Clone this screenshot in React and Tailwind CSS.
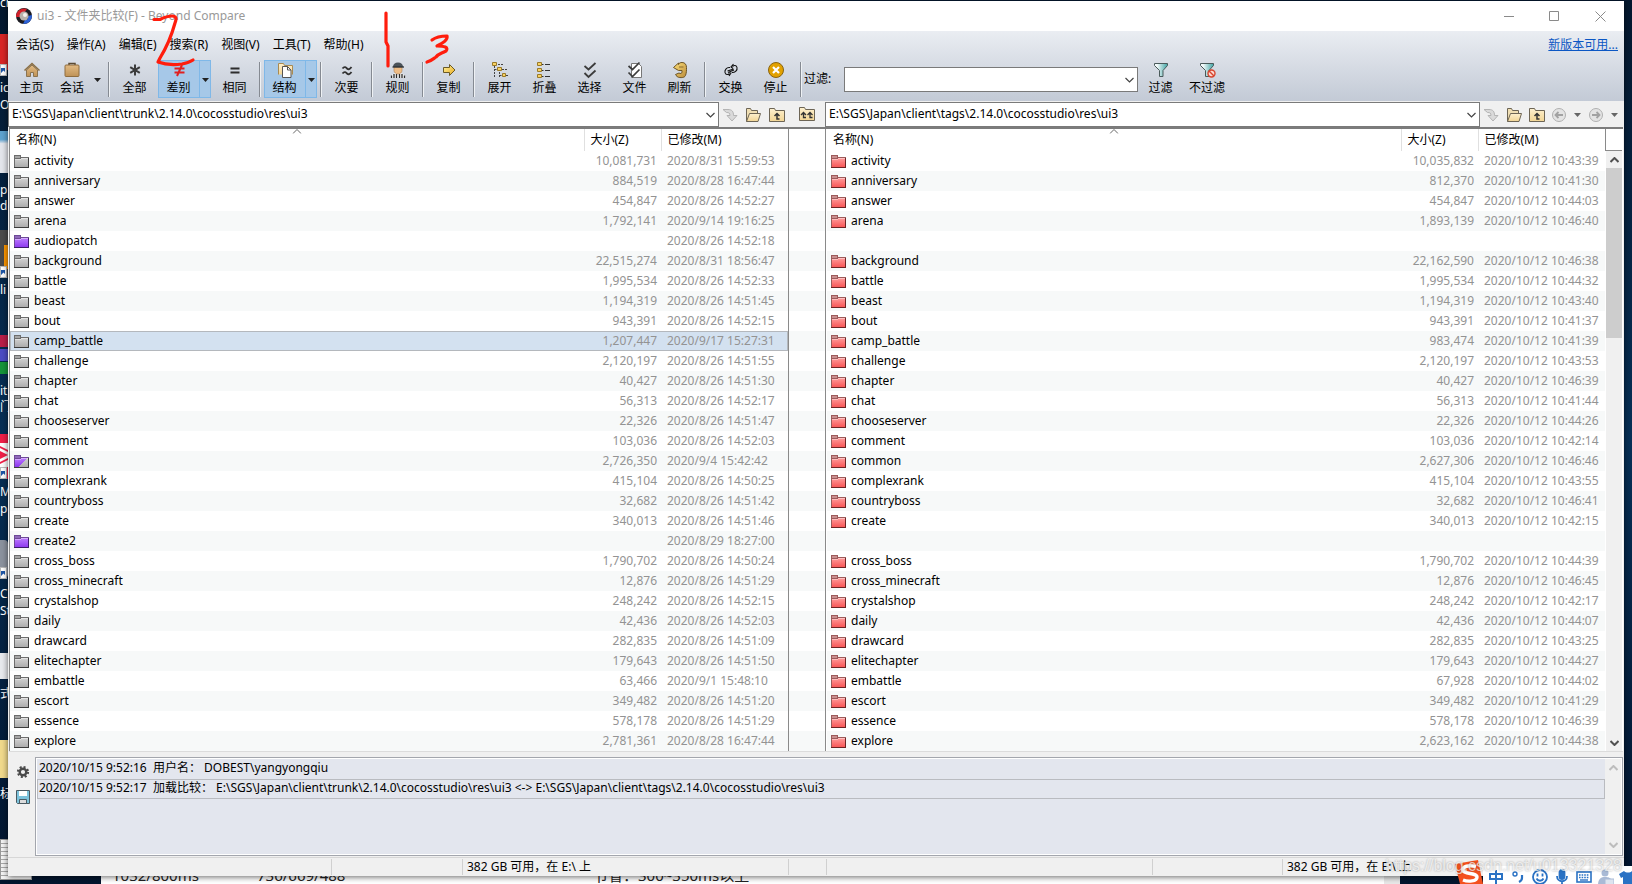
import React from "react";

const ROWS = [
  ["activity", "10,081,731", "2020/8/31 15:59:53", "10,035,832", "2020/10/12 10:43:39"],
  ["anniversary", "884,519", "2020/8/28 16:47:44", "812,370", "2020/10/12 10:41:30"],
  ["answer", "454,847", "2020/8/26 14:52:27", "454,847", "2020/10/12 10:44:03"],
  ["arena", "1,792,141", "2020/9/14 19:16:25", "1,893,139", "2020/10/12 10:46:40"],
  ["audiopatch", "", "2020/8/26 14:52:18", null, null, "purple"],
  ["background", "22,515,274", "2020/8/31 18:56:47", "22,162,590", "2020/10/12 10:46:38"],
  ["battle", "1,995,534", "2020/8/26 14:52:33", "1,995,534", "2020/10/12 10:44:32"],
  ["beast", "1,194,319", "2020/8/26 14:51:45", "1,194,319", "2020/10/12 10:43:40"],
  ["bout", "943,391", "2020/8/26 14:52:15", "943,391", "2020/10/12 10:41:37"],
  ["camp_battle", "1,207,447", "2020/9/17 15:27:31", "983,474", "2020/10/12 10:41:39"],
  ["challenge", "2,120,197", "2020/8/26 14:51:55", "2,120,197", "2020/10/12 10:43:53"],
  ["chapter", "40,427", "2020/8/26 14:51:30", "40,427", "2020/10/12 10:46:39"],
  ["chat", "56,313", "2020/8/26 14:52:17", "56,313", "2020/10/12 10:41:44"],
  ["chooseserver", "22,326", "2020/8/26 14:51:47", "22,326", "2020/10/12 10:44:26"],
  ["comment", "103,036", "2020/8/26 14:52:03", "103,036", "2020/10/12 10:42:14"],
  ["common", "2,726,350", "2020/9/4 15:42:42", "2,627,306", "2020/10/12 10:46:46", "mixed"],
  ["complexrank", "415,104", "2020/8/26 14:50:25", "415,104", "2020/10/12 10:43:55"],
  ["countryboss", "32,682", "2020/8/26 14:51:42", "32,682", "2020/10/12 10:46:41"],
  ["create", "340,013", "2020/8/26 14:51:46", "340,013", "2020/10/12 10:42:15"],
  ["create2", "", "2020/8/29 18:27:00", null, null, "purple"],
  ["cross_boss", "1,790,702", "2020/8/26 14:50:24", "1,790,702", "2020/10/12 10:44:39"],
  ["cross_minecraft", "12,876", "2020/8/26 14:51:29", "12,876", "2020/10/12 10:46:45"],
  ["crystalshop", "248,242", "2020/8/26 14:52:15", "248,242", "2020/10/12 10:42:17"],
  ["daily", "42,436", "2020/8/26 14:52:03", "42,436", "2020/10/12 10:44:07"],
  ["drawcard", "282,835", "2020/8/26 14:51:09", "282,835", "2020/10/12 10:43:25"],
  ["elitechapter", "179,643", "2020/8/26 14:51:50", "179,643", "2020/10/12 10:44:27"],
  ["embattle", "63,466", "2020/9/1 15:48:10", "67,928", "2020/10/12 10:44:02"],
  ["escort", "349,482", "2020/8/26 14:51:20", "349,482", "2020/10/12 10:41:29"],
  ["essence", "578,178", "2020/8/26 14:51:29", "578,178", "2020/10/12 10:46:39"],
  ["explore", "2,781,361", "2020/8/28 16:47:44", "2,623,162", "2020/10/12 10:44:38"],
];
const SELECTED = "camp_battle";
const stripe = (i) => (i % 2 ? "bg-[#f7f9f9]" : "bg-white");

const TONES = {
  gray: { tab: "#a6a6a6", top: "#d2d2d2", bottom: "#a9a9a9", edge: "#6d6d6d", dark: "#3c3c3c" },
  red: { tab: "#c98f8f", top: "#ff9c9c", bottom: "#f75050", edge: "#9c5b5b", dark: "#6b2323" },
  purple: { tab: "#8f68ba", top: "#bd7bff", bottom: "#8a35ee", edge: "#6e4a96", dark: "#3d1b6b" },
};

function Defs() {
  return (
    <svg className="absolute size-0" aria-hidden="true">
      <defs>
        {Object.entries(TONES).map(([k, t]) => (
          <linearGradient key={k} id={`folder-${k}`} x1="0" y1="0" x2="0" y2="1">
            <stop offset="0" stopColor={t.top} />
            <stop offset="1" stopColor={t.bottom} />
          </linearGradient>
        ))}
        <linearGradient id="tan" x1="0" y1="0" x2="0" y2="1">
          <stop offset="0" stopColor="#e2bb84" />
          <stop offset="1" stopColor="#bf9256" />
        </linearGradient>
        <linearGradient id="cream" x1="0" y1="0" x2="0" y2="1">
          <stop offset="0" stopColor="#fdf0cf" />
          <stop offset="1" stopColor="#f2d594" />
        </linearGradient>
        <linearGradient id="gold" x1="0" y1="0" x2="1" y2="1">
          <stop offset="0" stopColor="#fff3a0" />
          <stop offset="1" stopColor="#e9a91c" />
        </linearGradient>
        <linearGradient id="bronze" x1="0" y1="0" x2="1" y2="1">
          <stop offset="0" stopColor="#ffe27a" />
          <stop offset="1" stopColor="#b98a3a" />
        </linearGradient>
        <linearGradient id="teal" x1="0" y1="0" x2="1" y2="0">
          <stop offset="0.2" stopColor="#f4fbfb" />
          <stop offset="1" stopColor="#3fa3a3" />
        </linearGradient>
      </defs>
    </svg>
  );
}

function Folder({ tone }) {
  const base = tone === "mixed" ? "gray" : tone;
  const t = TONES[base];
  const tab = tone === "mixed" ? TONES.purple : t;
  return (
    <svg width="15" height="13" viewBox="0 0 15 13" shapeRendering="crispEdges" className="shrink-0" aria-hidden="true">
      <path d="M0 0h7v2h8v3H0z" fill={tab.edge} />
      <path d="M1 1h5v2H1zM7 3h7v1H7z" fill={tab.tab} />
      <path d="M0 4h7v-1h8v10H0z" fill={`url(#folder-${base})`} />
      {tone === "mixed" && <path d="M0 4h7v-1h7L4 12H0z" fill="url(#folder-purple)" />}
      <path d="M1 4.500h6M7 3.500h7" stroke="#fff" strokeOpacity=".4" fill="none" />
      <path d="M.5 4v8" stroke={tab.edge} />
      <path d="M0 12.500h14.500V3" stroke={t.dark} fill="none" />
    </svg>
  );
}

const Ic = ({ children, w = 18, h = 18 }) => (
  <svg width={w} height={h} viewBox={`0 0 ${w} ${h}`} fill="none" className="shrink-0" aria-hidden="true">
    {children}
  </svg>
);

const ICONS = {
  home: (
    <Ic>
      <path d="M3.500 9v6.500h4v-4h3v4h4V9L9 4z" fill="url(#tan)" stroke="#8a7350" />
      <path d="M1.500 9.500 9 2.500l7.500 7" stroke="#8a6f45" strokeWidth="1.600" />
    </Ic>
  ),
  bag: (
    <Ic>
      <path d="M6 4V2.500h6V4" stroke="#5b4a33" strokeWidth="1.500" />
      <rect x="2" y="4" width="14" height="11.500" rx="1" fill="url(#tan)" stroke="#8f6d3e" />
    </Ic>
  ),
  star: (
    <Ic>
      <path d="M9 3.500v11M4.200 6.200l9.600 5.600M13.800 6.200 4.200 11.800" stroke="#3c3c3c" strokeWidth="2" />
    </Ic>
  ),
  neq: (
    <Ic>
      <path d="M4.500 7.500h10M4.500 11.500h10M12 4 7 15" stroke="#e02020" strokeWidth="2" />
    </Ic>
  ),
  eq: (
    <Ic>
      <path d="M4.500 7.500h9M4.500 11.500h9" stroke="#2d2d2d" strokeWidth="2" />
    </Ic>
  ),
  struct: (
    <Ic>
      <path d="M2.500 13.500v-11h5l1 2h8v9" fill="url(#cream)" stroke="#a98a52" />
      <path d="M6.500 5.500h5l3.500 3.500v7.500h-8.500z" fill="#fff" stroke="#555" />
      <path d="M11.500 5.500V9H15" stroke="#555" />
    </Ic>
  ),
  approx: (
    <Ic>
      <path d="M4.500 7.500c2-2.500 3.500-1 4.500 0s2.500 1.500 4.500-1.500M4.500 12.500c2-2.500 3.500-1 4.500 0s2.500 1.500 4.500-1.500" stroke="#333" strokeWidth="1.800" />
    </Ic>
  ),
  referee: (
    <Ic>
      <path d="M1.500 17c0-3.500 3-5 7.500-5s7.500 1.500 7.500 5z" fill="#f2f2f2" />
      <path d="M2.500 14.500V17M5 13v4M7.500 13v4M10.500 13v4M13 13v4M15.500 14.500V17" stroke="#2b2b2b" strokeWidth="1.300" />
      <path d="M5 6h8v3.500c0 2-2 3.500-4 3.500s-4-1.500-4-3.500z" fill="#eebc85" stroke="#b08050" strokeWidth=".6" />
      <path d="M4 6C4 3 6 1.500 9 1.500S14 3 14 6z" fill="#4a5258" />
      <path d="M3.500 6h11.500" stroke="#2b2f33" strokeWidth="1.300" />
    </Ic>
  ),
  copy: (
    <Ic>
      <path d="M3.500 6.500h6v-3l5.500 5.500-5.500 5.500v-3h-6z" fill="url(#gold)" stroke="#6b5a26" />
    </Ic>
  ),
  expand: (
    <Ic>
      <path d="M3.500 5v12M3.500 8.500h3M8.500 11v5M8.500 14.500h4M7 3.500h5M11 8.500h5M15 14.500h3" stroke="#444" strokeDasharray="2 1" />
      <path d="M1.500 1.500h4v3h-4zM6.500 6.500h4v3h-4zM11.500 12.500h3v3h-3z" fill="#f8d264" stroke="#9a7a28" />
    </Ic>
  ),
  collapse: (
    <Ic>
      <path d="M6 3.500h1.500M9 3.500h5M6 9.500h1.500M9 9.500h5M6 15.500h1.500M9 15.500h5" stroke="#333" />
      <path d="M1.500 1.500h4v3h-4zM1.500 7.500h4v3h-4zM1.500 13.500h4v3h-4z" fill="#f8d264" stroke="#9a7a28" />
    </Ic>
  ),
  select: (
    <Ic>
      <path d="M3.500 5 7.500 8.500 14.500 2M3.500 12l4 4 7-6.500" stroke="#3c3c3c" strokeWidth="1.800" />
    </Ic>
  ),
  files: (
    <Ic>
      <path d="M5.500 2.500h7l3 3v11h-10z" fill="#fff" stroke="#777" />
      <path d="M2.500 5 6.500 8.500 13.500 1.500M2.500 11.500l4 4 7-7" stroke="#3c3c3c" strokeWidth="1.700" />
    </Ic>
  ),
  refresh: (
    <Ic>
      <path
        d="M2.500 6.500 7.500 2v1.500C8 2 9.500 1.500 11 1.500c3 0 4.500 2 4.500 5s0 5.500-1 8-5 2.500-8 1.500L4.500 13.500 8 12c1.500 1 3 .5 3-1V9.500H7.500z"
        fill="url(#bronze)"
        stroke="#6d5526"
      />
      <path d="M8 6h4.500" stroke="#8a6a2c" />
    </Ic>
  ),
  swap: (
    <Ic>
      <path d="M8 6.500h-1C4.500 6.500 2.500 9 3 11.500s3 2.500 4.500 1M7 11l2 1-2 3M10 11.500h1c2.500 0 4.500-2.500 4-5s-3-2.500-4.500-1M11 7.500 9 6l2.500-3M5.500 10l6-2M6 11.500l6-2.500" stroke="#111" strokeWidth="1.100" />
    </Ic>
  ),
  stop: (
    <Ic>
      <circle cx="9" cy="9" r="7.500" fill="#e2a100" stroke="#8a6410" />
      <path d="m6 6 6 6M12 6l-6 6" stroke="#fff" strokeWidth="2.200" />
    </Ic>
  ),
  filter: (
    <Ic>
      <path d="M2.500 2.500h13v2L11 9.500v6H7.500v-6L2.500 4.500z" fill="url(#teal)" stroke="#4a5a5a" />
    </Ic>
  ),
  nofilter: (
    <Ic>
      <path d="M2.500 2.500h13v2L11 9.500v6H7.500v-6L2.500 4.500z" fill="url(#teal)" stroke="#4a5a5a" />
      <circle cx="13.500" cy="12.500" r="3.500" fill="#fbd8d0" stroke="#d8452e" strokeWidth="1.400" />
      <path d="m11 10 5 5" stroke="#d8452e" strokeWidth="1.400" />
    </Ic>
  ),
};

const Tri = ({ color = "#222" }) => (
  <svg width="7" height="4" viewBox="0 0 7 4" aria-hidden="true">
    <path d="M0 0h7L3.500 4z" fill={color} />
  </svg>
);

const Chevron = ({ up, color = "#444", bold }) => (
  <svg width="9" height="6" viewBox="0 0 9 6" fill="none" aria-hidden="true">
    <path d={up ? "M.5 5 4.500 1l4 4" : "M.5 1 4.500 5l4-4"} stroke={color} strokeWidth={bold ? 2 : 1.2} />
  </svg>
);

function Tool({ icon, label, wide }) {
  return (
    <button className={`flex h-[38px] shrink-0 flex-col items-center gap-px pt-px ${wide ? "w-12" : "w-[45px]"}`}>
      {ICONS[icon]}
      <span className="leading-4 whitespace-nowrap">{label}</span>
    </button>
  );
}

function SplitTool({ icon, label, active }) {
  return (
    <div className={`flex h-[38px] shrink-0 ${active ? "mx-px bg-[#a6c8e8] ring-1 ring-inset ring-[#7fb8e8]" : ""}`}>
      <button className={`flex flex-col items-center gap-px pt-px ${active ? "w-[41px]" : "w-10"}`}>
        {ICONS[icon]}
        <span className="leading-4">{label}</span>
      </button>
      <button
        aria-label={`${label} ▾`}
        className={`flex items-center justify-center pt-px ${active ? "w-3 border-l border-[#7fb8e8]" : "w-[11px]"}`}
      >
        <Tri />
      </button>
    </div>
  );
}

const Sep = () => (
  <div className="flex h-[35px] w-[6px] shrink-0 justify-center">
    <div className="w-px bg-[#858a92]" />
    <div className="w-px bg-[#eef1f4]" />
  </div>
);

function PathSelect({ value, label }) {
  return (
    <div className="relative min-w-0 flex-1">
      <select
        aria-label={label}
        className="h-[25px] w-full appearance-none border border-[#7a7a7a] bg-white pr-6 pb-px pl-[3px] text-black"
      >
        <option>{value}</option>
      </select>
      <span className="pointer-events-none absolute top-[10px] right-1">
        <Chevron />
      </span>
    </div>
  );
}

const Go = () => (
  <Ic w={16} h={16}>
    <path d="M1 2.500h5c4 0 5.500 2 5.500 6H15l-5 5.500-5-5.500h3C8 6 7 5.500 4.500 5.500z" fill="#dadada" stroke="#b4b4b4" />
  </Ic>
);
const OpenFolder = () => (
  <Ic w={16} h={16}>
    <path d="M1.500 14.500v-13h4l1 2h6v3" fill="#f0dfb4" stroke="#6d6555" />
    <path d="M4.500 6.500h11l-2.500 8H1.500z" fill="url(#cream)" stroke="#6d6555" />
  </Ic>
);
const UpFolder = ({ double }) => (
  <Ic w={16} h={16}>
    <path d="M.5 14.500v-13h5l1 2h9v11z" fill="url(#cream)" stroke="#6d6555" />
    {double ? (
      <path d="M2 9 4.500 6.500 7 9M4.500 7v4.500H7M8.500 9 11 6.500 13.500 9M11 7v4.500h2.500" stroke="#333" strokeWidth="1.300" />
    ) : (
      <path d="M5.500 9 8 6.500 10.500 9M8 7v5h2.500" stroke="#333" strokeWidth="1.500" />
    )}
  </Ic>
);
const RoundArrow = ({ flip }) => (
  <Ic w={16} h={16}>
    <circle cx="8" cy="8" r="6.500" fill="#e4e4e4" stroke="#b0b0b0" />
    <path d={flip ? "M4 8h7M8.500 5l3 3-3 3" : "M12 8H5M7.500 5l-3 3 3 3"} stroke="#a2a2a2" strokeWidth="1.800" />
  </Ic>
);

const IconBtn = ({ label, children, className = "" }) => (
  <button aria-label={label} className={`flex h-6 shrink-0 items-center justify-center ${className}`}>
    {children}
  </button>
);

function Pane({ side }) {
  const left = side === "left";
  return (
    <div className={`min-w-0 flex-1 border-l border-[#8a8a8a] bg-white ${left ? "border-r" : "pl-px"}`}>
      <table className="w-full table-fixed border-collapse">
        <colgroup>
          <col />
          <col className="w-[77px]" />
          <col className="w-[127px]" />
        </colgroup>
        <thead>
          <tr className="h-[22px] text-left">
            <th className="relative p-0 pl-[6px] font-normal">
              名称(N)
              <span className="absolute top-0 left-1/2 -translate-x-1/2">
                <svg width="9" height="5" viewBox="0 0 9 5" fill="none" aria-hidden="true">
                  <path d="m.5 4.500 4-4 4 4" stroke="#666" />
                </svg>
              </span>
            </th>
            <th className="border-l border-[#e0e0e0] p-0 pl-[6px] font-normal">大小(Z)</th>
            <th className="border-l border-[#e0e0e0] p-0 pl-[6px] font-normal">已修改(M)</th>
          </tr>
        </thead>
        <tbody>
          {ROWS.map((r, i) => {
            const present = left || r[3] !== null;
            const sel = left && r[0] === SELECTED;
            return (
              <tr
                key={r[0]}
                className={`h-5 leading-4 ${sel ? "bg-[#d3e1f0] outline outline-1 -outline-offset-1 outline-[#b4b8bd]" : stripe(i)}`}
              >
                <td className="p-0 pl-1">
                  {present && (
                    <span className="flex items-center gap-[5px]">
                      <Folder tone={left ? r[5] || "gray" : "red"} />
                      {r[0]}
                    </span>
                  )}
                </td>
                <td className="p-0 pr-1 text-right text-[#939393]">{present && (left ? r[1] : r[3])}</td>
                <td className="p-0 pl-[6px] whitespace-nowrap text-[#939393]">{present && (left ? r[2] : r[4])}</td>
              </tr>
            );
          })}
        </tbody>
      </table>
    </div>
  );
}

function Status({ className = "", children }) {
  return <div className={`h-4 border-[#d0d0d0] pl-1 leading-4 whitespace-nowrap ${className}`}>{children}</div>;
}

const Shortcut = ({ className }) => (
  <div className={`absolute left-0 flex h-3 w-[7px] items-center border border-[#bbb] bg-white ${className}`}>
    <svg width="5" height="7" viewBox="0 0 5 7" aria-hidden="true">
      <path d="M0 1h4v4L2.500 3.500 0 6z" fill="#1d56a8" />
    </svg>
  </div>
);

const DESK_LABELS = [
  ["ch", "top-[-5px]"],
  ["ic", "top-[80px]"],
  ["O", "top-[97px]"],
  ["pp", "top-[182px]"],
  ["de", "top-[198px]"],
  ["li", "top-[282px]"],
  ["it", "top-[383px]"],
  ["门", "top-[399px]"],
  ["M", "top-[484px]"],
  ["pe", "top-[501px]"],
  ["C", "top-[586px]"],
  ["St", "top-[603px]"],
  ["式", "top-[686px]"],
  ["标", "top-[786px]"],
];

function Desktop() {
  return (
    <div className="absolute inset-0 overflow-hidden bg-linear-to-b from-[#04182f] via-[#073057] to-[#03152e]">
      <div className="absolute top-[34px] left-0 h-[36px] w-2 bg-[#d92626]" />
      <Shortcut className="top-[64px]" />
      <div className="absolute top-[131px] left-0 h-[42px] w-2 bg-linear-to-b from-[#5ea3cf] from-20% to-[#e4e6ec] to-30%" />
      <div className="absolute top-[230px] left-0 h-[48px] w-2 bg-[#4b4b4b]" />
      <div className="absolute top-[245px] left-1 h-6 w-1 bg-[#ff9800]" />
      <Shortcut className="top-[266px]" />
      <div className="absolute top-[335px] left-0 h-3 w-2 bg-[#b81f48]" />
      <div className="absolute top-[349px] left-0 h-3 w-2 bg-[#4c4cc4]" />
      <div className="absolute top-[362px] left-0 h-3 w-2 bg-[#15953a]" />
      <div className="absolute top-[434px] left-0 h-[45px] w-2 bg-[#f01f48]" />
      <svg width="8" height="24" viewBox="0 0 8 24" className="absolute top-[443px] left-0" aria-hidden="true">
        <path d="M0 0h8v7L0 3zM0 24h8v-7L0 21z" fill="#fff" />
        <path d="M0 5l8 4v6l-8 4z" fill="#fff" />
        <path d="M0 8l8 4-8 4z" fill="#f01f48" />
      </svg>
      <Shortcut className="top-[467px]" />
      <div className="absolute top-[540px] left-0 h-[38px] w-2 rounded-r bg-[#8b929e]" />
      <Shortcut className="top-[567px]" />
      <div className="absolute top-[653px] left-0 h-[26px] w-2 bg-[#e8eaee]" />
      <div className="absolute top-[740px] left-0 h-[38px] w-2 bg-[#f1da8c]" />
      <div className="absolute top-[839px] left-0 h-[41px] w-8 border border-[#999] bg-[repeating-linear-gradient(#f4f4f4_0_3px,#a8a8a8_3px_4px)]" />
      {DESK_LABELS.map(([t, pos]) => (
        <span key={t} className={`absolute left-0 w-2 overflow-hidden leading-4 whitespace-nowrap text-white ${pos}`}>
          {t}
        </span>
      ))}
      <div className="absolute right-[232px] bottom-0 left-[101px] h-4 overflow-hidden bg-white text-[15px] leading-5 whitespace-nowrap text-[#222]">
        <span className="absolute top-[-3px] left-[11px]">1032/800ms</span>
        <span className="absolute top-[-3px] left-[156px]">736/669/488</span>
        <span className="absolute top-[-3px] left-[492px]">节省：300~350ms以上</span>
        <div className="absolute inset-y-0 right-0 w-4 bg-[#e8e8e8]" />
      </div>
    </div>
  );
}

const IME_ICONS = [
  <svg key="lang" width="14" height="14" viewBox="0 0 14 14" fill="none" stroke="currentColor" strokeWidth="2" aria-hidden="true">
    <path d="M1 4h12v5H1zM7 0v14" />
  </svg>,
  <svg key="punct" width="14" height="12" viewBox="0 0 14 12" fill="none" stroke="currentColor" aria-hidden="true">
    <circle cx="4" cy="3" r="2" strokeWidth="1.400" />
    <path d="M11 4v3c0 2-1 3-3 4" strokeWidth="2.200" />
  </svg>,
  <svg key="face" width="16" height="16" viewBox="0 0 16 16" fill="none" stroke="currentColor" strokeWidth="1.800" aria-hidden="true">
    <circle cx="8" cy="8" r="7" />
    <path d="M5.500 4.500v3M10.500 4.500v3M4.500 9.500c1.500 3 5.500 3 7 0" />
  </svg>,
  <svg key="mic" width="12" height="16" viewBox="0 0 12 16" fill="none" stroke="currentColor" strokeWidth="1.800" aria-hidden="true">
    <rect x="3.500" y="1" width="5" height="9" rx="2.500" fill="currentColor" />
    <path d="M1 7c0 7 10 7 10 0M6 12v4" />
  </svg>,
  <svg key="keys" width="16" height="12" viewBox="0 0 16 12" fill="none" stroke="currentColor" aria-hidden="true">
    <rect x="1" y="1" width="14" height="10" strokeWidth="1.600" />
    <path d="M3 4h10M3 6.500h10" strokeWidth="1.600" strokeDasharray="1.600 1" />
    <path d="M4 9h8" strokeWidth="1.400" />
  </svg>,
  <svg key="user" width="16" height="16" viewBox="0 0 16 16" fill="#a9bad6" aria-hidden="true">
    <circle cx="7" cy="4" r="3.500" />
    <path d="M0 16c0-6 3-8 7-8s5 1 6 2v6z" />
    <path d="M7 10h9v6H7z" fill="#dde4ef" stroke="#a9bad6" />
  </svg>,
  <svg key="skin" width="18" height="14" viewBox="0 0 18 14" fill="currentColor" aria-hidden="true">
    <path d="m0 4 5-3c2 2 6 2 8 0l5 3-2 4-2-1v7H4V7L2 8z" />
  </svg>,
];

function ImeBar() {
  return (
    <div className="absolute right-0 bottom-0 h-[18px] w-[149px] bg-white text-[#2a72c4]">
      <svg width="28" height="24" viewBox="0 0 28 24" className="absolute bottom-0 -left-[28px]" aria-hidden="true">
        <path d="M0 4 23 0l5 24H5z" fill="#f4511e" />
        <path d="M21 6.500C14 4.500 7 6.500 8 10.500s14 2 14 6.500-9 5-14 3" stroke="#fff" strokeWidth="3.400" fill="none" />
      </svg>
      <div className="flex h-full items-center overflow-hidden pt-1 pl-[2px]">
        {IME_ICONS.map((icon) => (
          <span key={icon.key} className="flex w-[22px] shrink-0 justify-center">{icon}</span>
        ))}
      </div>
    </div>
  );
}

function Annotations() {
  return (
    <svg width="460" height="80" viewBox="0 0 460 80" fill="none" stroke="#ff1d0d" strokeWidth="3.200" strokeLinecap="round" strokeLinejoin="round" className="pointer-events-none absolute top-0 left-0" aria-hidden="true">
      <path d="M154 19.500h6c4-2 7-3.500 12-3.500 4 0 5 2 3 7-3 11-7 22-15 35l-2 4c8 3 16 3 24 2 5-1 8-2 11-4" />
      <path d="M386 13v29l2 4v20" />
      <path d="M432 40c4-3 9-4 15-4 1 4-4 7-10 10 7 0 12 1 9 5-6 3-8 3-10 6-3 2-5 4-9 5" />
    </svg>
  );
}

const MENUS = ["会话(S)", "操作(A)", "编辑(E)", "搜索(R)", "视图(V)", "工具(T)", "帮助(H)"];

export default function App() {
  return (
    <div className="relative min-h-screen overflow-hidden pt-px font-['Noto_Sans','Noto_Sans_CJK_SC',sans-serif] text-[12px] text-black">
      <Defs />
      <Desktop />
      <main className="relative mx-2 flex flex-col bg-[#f0f0f0] shadow-[0_1px_6px_rgba(0,0,0,0.6)]">
        <header className="flex h-[30px] items-center bg-white pl-2">
          <svg width="16" height="16" viewBox="0 0 16 16" aria-hidden="true">
            <circle cx="8" cy="8" r="8" fill="#1b1b22" />
            <path d="M0 9C0 3 5-1 11 1L8 5C5 5 4 6 4 9z" fill="#d3202a" />
            <path d="M16 7c0 6-4 9-9 9l2-4c3 0 3-2 3-4z" fill="#2c62d8" />
            <circle cx="8" cy="8" r="4.500" fill="#b9b2ac" />
            <circle cx="9" cy="7" r="2" fill="#f5f2ee" />
          </svg>
          <h1 className="flex-1 pl-[5px] text-[#999]">ui3 - 文件夹比较(F) - Beyond Compare</h1>
          <div className="flex">
            <button aria-label="最小化" className="flex h-7 w-[45px] items-center justify-center">
              <svg width="10" height="10" fill="none" stroke="#8a8a8a"><path d="M0 5.500h10" /></svg>
            </button>
            <button aria-label="最大化" className="flex h-7 w-[45px] items-center justify-center">
              <svg width="10" height="10" fill="none" stroke="#8a8a8a"><path d="M.5.500h9v9h-9z" /></svg>
            </button>
            <button aria-label="关闭" className="flex h-7 w-12 items-center justify-center">
              <svg width="11" height="11" fill="none" stroke="#8a8a8a"><path d="m.5.500 10 10M10.500.5l-10 10" /></svg>
            </button>
          </div>
        </header>

        <div className="h-[70px] bg-linear-to-b from-[#eaedf2] to-[#c3cad6]">
          <div className="flex h-[29px] items-center pr-[6px] pb-[2px] pl-2">
            <nav className="flex flex-1 gap-[13px]">
              {MENUS.map((m) => (
                <button key={m} className="leading-4 whitespace-nowrap">{m}</button>
              ))}
            </nav>
            <a href="#update" className="leading-4 text-[#0b57c4] underline">新版本可用...</a>
          </div>
          <div className="flex items-center pl-[3px]">
            <button className="flex h-[38px] w-[41px] shrink-0 flex-col items-center gap-px pt-px">
              {ICONS.home}
              <span className="leading-4">主页</span>
            </button>
            <div className="shrink-0 pr-[3px]">
              <SplitTool icon="bag" label="会话" />
            </div>
            <Sep />
            <Tool icon="star" label="全部" />
            <SplitTool icon="neq" label="差别" active />
            <Tool icon="eq" label="相同" />
            <Sep />
            <SplitTool icon="struct" label="结构" active />
            <Sep />
            <Tool icon="approx" label="次要" />
            <Sep />
            <Tool icon="referee" label="规则" />
            <Sep />
            <Tool icon="copy" label="复制" />
            <Sep />
            <Tool icon="expand" label="展开" />
            <Tool icon="collapse" label="折叠" />
            <Tool icon="select" label="选择" />
            <Tool icon="files" label="文件" />
            <Tool icon="refresh" label="刷新" />
            <Sep />
            <Tool icon="swap" label="交换" />
            <Tool icon="stop" label="停止" />
            <Sep />
            <label htmlFor="filter" className="w-10 shrink-0 whitespace-nowrap">过滤:</label>
            <div className="relative w-[294px] min-w-0">
              <select id="filter" className="h-[25px] w-full appearance-none border border-[#7a7a7a] bg-white pl-1">
                <option></option>
              </select>
              <span className="pointer-events-none absolute top-[10px] right-1">
                <Chevron />
              </span>
            </div>
            <Tool icon="filter" label="过滤" />
            <Tool icon="nofilter" label="不过滤" wide />
          </div>
        </div>

        <div className="flex h-[26px] items-start pt-px">
          <div className="flex w-[calc(50%-27px)] items-center">
            <PathSelect label="左侧路径" value="E:\SGS\Japan\client\trunk\2.14.0\cocosstudio\res\ui3" />
            <IconBtn label="转到" className="w-[22px]"><Go /></IconBtn>
            <IconBtn label="浏览左侧" className="w-6"><OpenFolder /></IconBtn>
            <IconBtn label="左侧上一级" className="w-6"><UpFolder /></IconBtn>
          </div>
          <IconBtn label="两侧上一级" className="w-9"><UpFolder double /></IconBtn>
          <div className="flex min-w-0 flex-1 items-center">
            <PathSelect label="右侧路径" value="E:\SGS\Japan\client\tags\2.14.0\cocosstudio\res\ui3" />
            <IconBtn label="转到右侧" className="w-[22px]"><Go /></IconBtn>
            <IconBtn label="浏览右侧" className="w-6"><OpenFolder /></IconBtn>
            <IconBtn label="右侧上一级" className="w-[22px]"><UpFolder /></IconBtn>
            <IconBtn label="后退" className="w-[22px]"><RoundArrow /></IconBtn>
            <IconBtn label="后退历史" className="w-[15px]"><Tri color="#666" /></IconBtn>
            <IconBtn label="前进" className="w-[22px]"><RoundArrow flip /></IconBtn>
            <IconBtn label="前进历史" className="w-[17px] pr-[2px]"><Tri color="#666" /></IconBtn>
          </div>
        </div>

        <section className="mx-px flex border-t-2 border-b border-t-[#7c7c7c] border-b-[#dcdcdc]">
          <Pane side="left" />
          <div className="w-9 shrink-0">
            <div className="h-[22px] bg-white" />
            {ROWS.map((r, i) => (
              <div key={r[0]} className={`h-5 ${stripe(i)}`} />
            ))}
          </div>
          <Pane side="right" />
          <div className="flex w-[18px] shrink-0 flex-col bg-white pr-px">
            <div className="h-[22px] border-b border-l border-[#8a8a8a]" />
            <div className="flex flex-1 flex-col items-center border-l border-white bg-[#f0f0f0]">
              <button aria-label="向上滚动" className="flex h-[17px] w-full items-center justify-center"><Chevron up bold color="#505050" /></button>
              <div className="h-[170px] w-full bg-[#cdcdcd]" />
              <div className="flex-1" />
              <button aria-label="向下滚动" className="flex h-[17px] w-full items-center justify-center"><Chevron bold color="#505050" /></button>
            </div>
          </div>
        </section>

        <section className="flex pt-[5px] pr-px">
          <div className="flex w-[27px] shrink-0 flex-col items-center gap-[11px] pt-2 pl-[3px]">
            <button aria-label="设置">
              <svg width="14" height="14" viewBox="0 0 14 14" fill="none" stroke="#4a4a4a" aria-hidden="true">
                <circle cx="7" cy="7" r="3.300" strokeWidth="2.400" />
                <circle cx="7" cy="7" r="5" strokeWidth="2.200" strokeDasharray="1.963 1.963" />
              </svg>
            </button>
            <button aria-label="保存日志">
              <svg width="14" height="14" viewBox="0 0 14 14" aria-hidden="true">
                <path d="M.5.500h13v13h-12l-1-1z" fill="#7cc3dc" stroke="#4a5a62" />
                <path d="M3 1h8v5H3z" fill="#fff" />
                <path d="M3.500 9.500h7v4h-7z" fill="#ddd" stroke="#4a5a62" />
              </svg>
            </button>
          </div>
          <div className="flex h-[99px] min-w-0 flex-1 border border-[#a3a6ad] bg-white p-px">
            <ul className="min-w-0 flex-1 bg-[#e3e6ee] leading-4 whitespace-pre">
              <li className="h-5 border border-transparent pl-px">{"2020/10/15 9:52:16  用户名： DOBEST\\yangyongqiu"}</li>
              <li className="h-5 border border-[#b9bbc0] pl-px">
                {"2020/10/15 9:52:17  加载比较： E:\\SGS\\Japan\\client\\trunk\\2.14.0\\cocosstudio\\res\\ui3 <-> E:\\SGS\\Japan\\client\\tags\\2.14.0\\cocosstudio\\res\\ui3"}
              </li>
            </ul>
            <div className="flex w-4 flex-col items-center justify-between bg-[#f0f0f0] py-[6px]">
              <Chevron up bold color="#bdbdbd" />
              <Chevron bold color="#bdbdbd" />
            </div>
          </div>
        </section>

        <footer className="mt-px flex h-[19px] items-center border-t border-[#d7d7d7]">
          <div className="flex w-[calc(50%-28px)]">
            <Status className="flex-1" />
            <Status className="w-[131px] border-l" />
            <Status className="w-[326px] border-l">382 GB 可用，在 E:\ 上</Status>
          </div>
          <Status className="w-[38px] border-l" />
          <div className="flex min-w-0 flex-1">
            <Status className="flex-1 border-l" />
            <Status className="w-[130px] border-l" />
            <Status className="w-[342px] border-l">382 GB 可用，在 E:\ 上</Status>
          </div>
        </footer>
      </main>
      <ImeBar />
      <span className="absolute right-[10px] bottom-2 font-['Liberation_Sans',sans-serif] text-[16px] leading-5 text-white/70 [text-shadow:0_0_2px_rgba(0,0,0,0.35)]">
        https://blog.csdn.net/u013321328
      </span>
      <Annotations />
    </div>
  );
}
